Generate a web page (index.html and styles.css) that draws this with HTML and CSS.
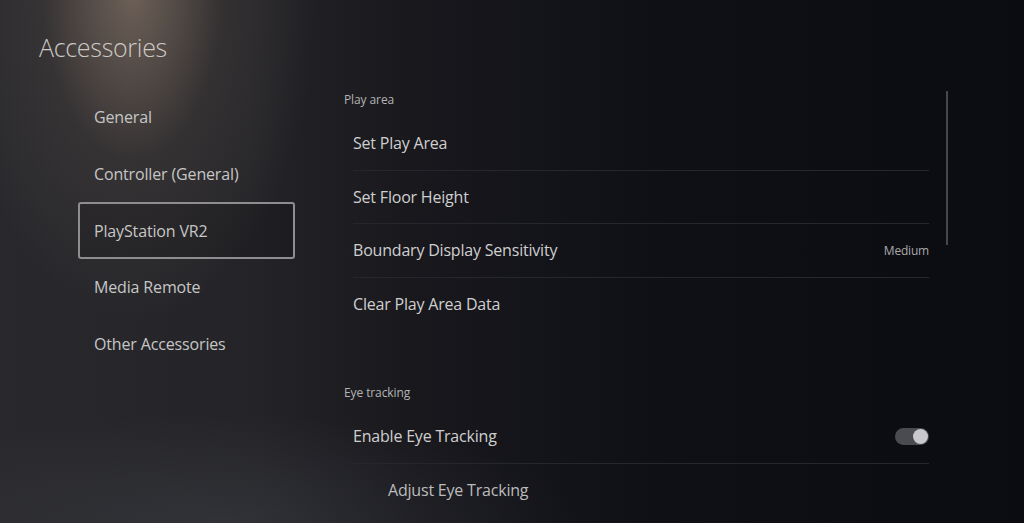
FILE: index.html
```html
<!DOCTYPE html>
<html lang="en">
<head>
    <meta charset="UTF-8">
    <title>Accessories</title>
    <meta name="viewport" content="width=device-width, initial-scale=1.0">
    <link rel="stylesheet" href="styles.css">
</head>
<body>
<div class="screen">
    <aside class="side">
        <h1 class="title">Accessories</h1>
        <nav class="menu">
            <div class="menu-item">General</div>
            <div class="menu-item">Controller (General)</div>
            <div class="menu-item selected">PlayStation VR2</div>
            <div class="menu-item">Media Remote</div>
            <div class="menu-item">Other Accessories</div>
        </nav>
    </aside>
    <main class="content">
        <section class="group">
            <div class="group-head">Play area</div>
            <div class="row">Set Play Area</div>
            <div class="row">Set Floor Height</div>
            <div class="row">Boundary Display Sensitivity <span class="value">Medium</span></div>
            <div class="row last">Clear Play Area Data</div>
        </section>
        <section class="group">
            <div class="group-head">Eye tracking</div>
            <div class="row">Enable Eye Tracking <span class="toggle"></span></div>
            <div class="row last sub">Adjust Eye Tracking</div>
        </section>
        <div class="scrollbar"></div>
    </main>
</div>
</body>
</html>
```

FILE: styles.css
```css
html, body {
    margin: 0;
    height: 100%;
}

body {
    font-family: "Open Sans", "Noto Sans", sans-serif;
    color: #d2d2d2;
    overflow: hidden;
}

.screen {
    width: 1024px;
    height: 523px;
    display: flex;
    background:
        radial-gradient(ellipse 90px 170px at 132px -10px, rgba(160, 138, 120, 0.45), rgba(160, 138, 120, 0) 100%),
        radial-gradient(ellipse 180px 320px at 135px 0px, rgba(120, 104, 92, 0.35), rgba(120, 104, 92, 0) 100%),
        radial-gradient(ellipse 360px 110px at 220px 523px, rgba(64, 66, 72, 0.45), rgba(64, 66, 72, 0) 100%),
        linear-gradient(90deg, #29292d 0%, #242428 25%, #18181d 40%, #0f1016 65%, #0b0c12 100%);
}

/* left column */
.side {
    width: 330px;
    flex-shrink: 0;
}

.title {
    margin: 31px 0 0 39px;
    font-size: 25px;
    font-weight: 300;
    line-height: 32px;
    color: #cdc9c6;
    letter-spacing: -0.3px;
}

.menu {
    margin: 26px 0 0 78px;
    width: 217px;
}

.menu-item {
    height: 56.5px;
    box-sizing: border-box;
    display: flex;
    align-items: center;
    padding-left: 14px;
    font-size: 16px;
    letter-spacing: -0.15px;
    color: #c6c6c6;
    border: 2px solid transparent;
    border-radius: 3px;
}

.menu-item.selected {
    height: 57px;
    border-color: #8e8e90;
    background: rgba(0, 0, 0, 0.12);
}

/* right column */
.content {
    position: relative;
    padding: 83px 0 0 14px;
    width: 585px;
}

.group {
    margin-bottom: 46px;
}

.group-head {
    height: 34px;
    line-height: 34px;
    font-size: 12px;
    letter-spacing: -0.1px;
    color: #b4b4b4;
}

.row {
    height: 52.5px;
    margin-left: 9px;
    display: flex;
    align-items: center;
    justify-content: space-between;
    font-size: 16px;
    letter-spacing: -0.2px;
    color: #cfcfcf;
    border-bottom: 1px solid #26272c;
}

.row.last {
    border-bottom: none;
}

.row.sub {
    padding-left: 35px;
    color: #bcbcbc;
}

.value {
    font-size: 12px;
    color: #a9a9ab;
}

.toggle {
    position: relative;
    width: 34px;
    height: 17px;
    border-radius: 9px;
    background: #4a4b51;
}

.toggle::after {
    content: "";
    position: absolute;
    right: 1px;
    top: 1px;
    width: 15px;
    height: 15px;
    border-radius: 50%;
    background: #c9c9cd;
}

.scrollbar {
    position: absolute;
    left: 616px;
    top: 91px;
    width: 2px;
    height: 154px;
    background: #46474c;
}
```
